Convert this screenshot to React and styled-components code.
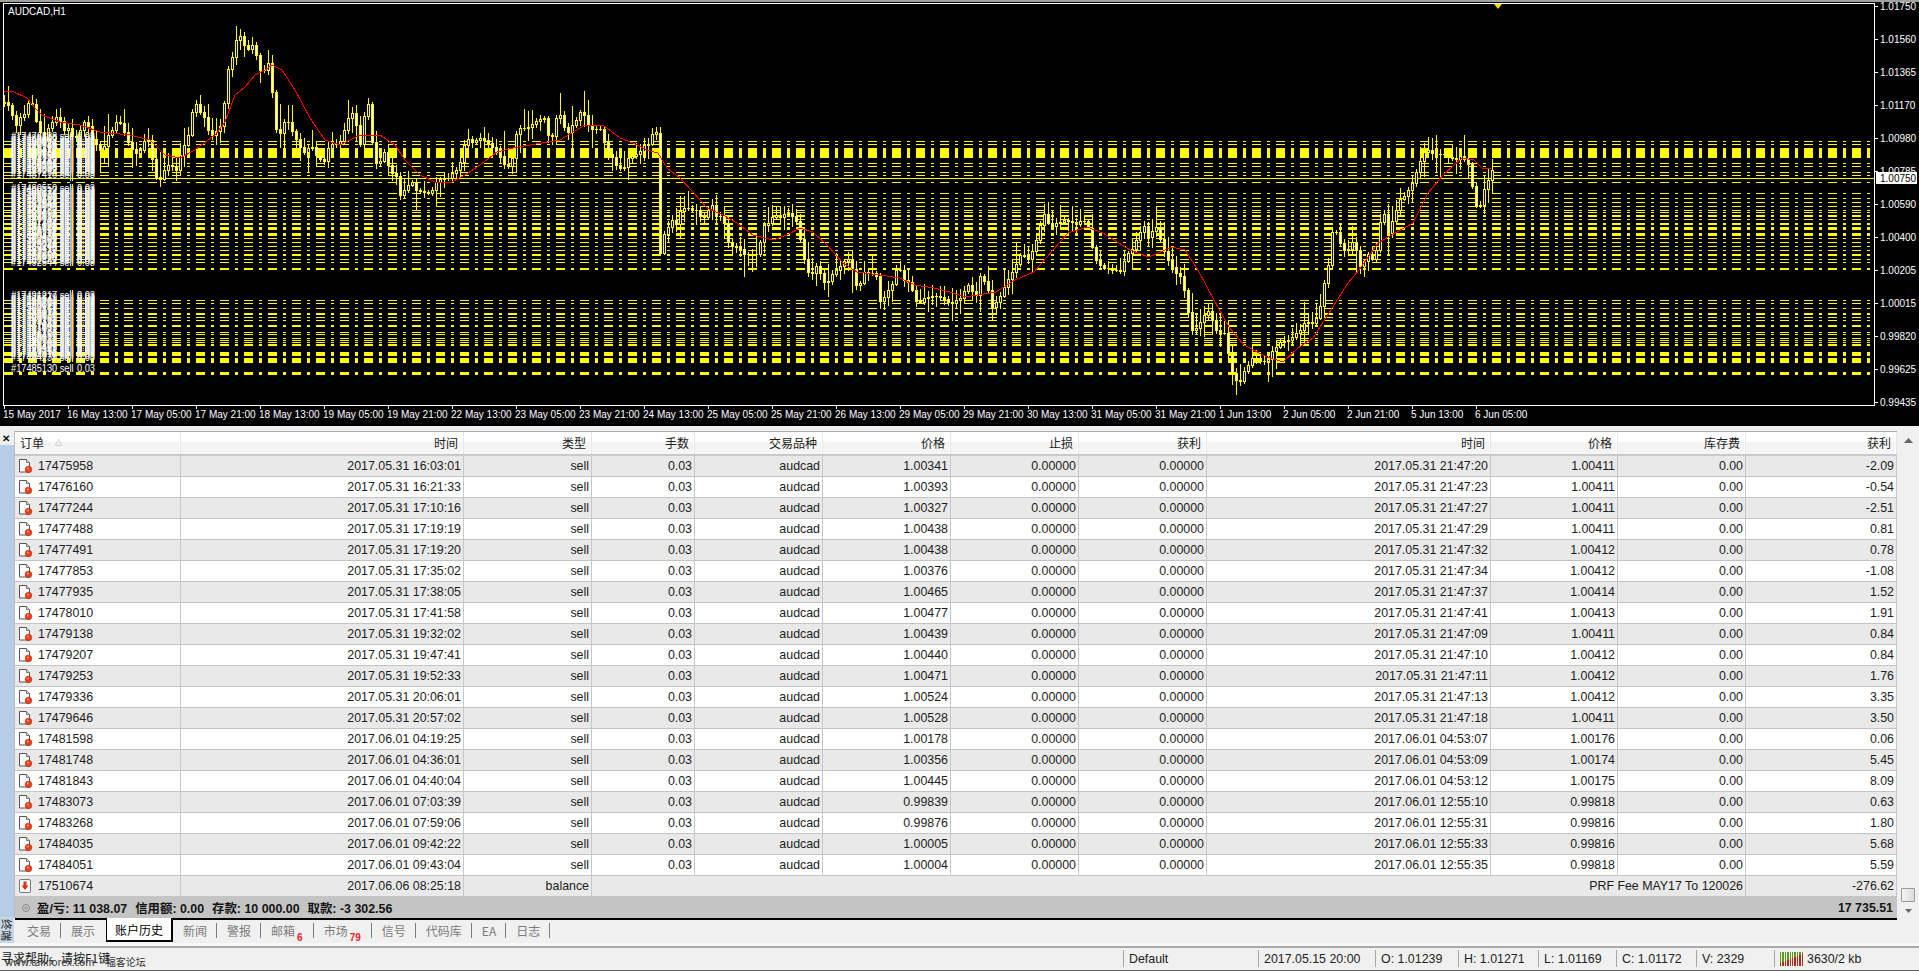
import React from "react";
import styled, { createGlobalStyle } from "styled-components";

const Global = createGlobalStyle`
  html, body { margin: 0; padding: 0; background: #f0f0f0; overflow: hidden; }
  * { box-sizing: border-box; }
`;

const UI_FONT = `"Liberation Sans", "Noto Sans CJK SC", sans-serif`;

/* ---------- chart data ---------- */
const LEFT_KEYS = [[13,310],[25,315],[37,345],[49,380],[61,350],[73,340],[85,310],[97,310],[109,370],[121,400],[133,420],[145,380],[157,365],[169,350],[181,365],[193,390],[205,380],[217,410],[229,410],[241,390],[253,365],[265,380],[277,420],[289,430],[301,450],[313,440],[325,400],[337,390],[349,360],[361,370],[373,400],[385,430],[397,450],[409,460],[421,450],[433,420],[445,420],[457,480],[469,540],[481,540],[493,510],[505,490],[517,500],[529,510],[541,460],[553,430],[565,400],[577,330],[589,310],[601,335],[613,350],[625,395],[637,405],[649,390],[661,380],[673,300],[685,200],[697,165],[709,115],[721,105],[733,135],[745,145],[757,135],[769,165],[781,215],[793,210],[805,190],[817,285],[829,400],[841,400],[853,365],[865,370],[877,395],[889,420],[901,440],[913,460],[925,440],[937,440],[949,465],[961,480],[973,480],[985,440],[997,430],[1009,430],[1021,420],[1033,385],[1045,350],[1057,340],[1069,380],[1081,435],[1093,340],[1105,310],[1117,440],[1129,495],[1141,480],[1153,455],[1165,500],[1177,520],[1189,530],[1201,590],[1213,570],[1225,550],[1237,550],[1249,570],[1261,575],[1273,575],[1285,580],[1297,565],[1309,545],[1321,535],[1333,535],[1345,535],[1357,520],[1369,510],[1381,480],[1393,430],[1405,415],[1417,430],[1429,420],[1441,415],[1453,420],[1465,430]].map(([v, y]) => [v / 3, y / 3]);
const MID_KEYS = [[10,115],[25,130],[48,155],[60,170],[73,195],[88,200],[97,170],[108,100],[122,85],[133,85],[145,85],[157,75],[170,60],[181,55],[193,55],[205,110],[217,110],[229,50],[241,45],[253,85],[265,100],[277,75],[289,60],[301,35],[313,45],[325,80],[337,90],[349,85],[361,85],[373,130],[385,165],[397,170],[409,195],[421,205],[433,200],[445,170],[457,165],[469,165],[481,150],[493,130],[505,130],[517,100],[529,95],[541,100],[553,430],[565,380],[577,360],[589,370],[601,330],[613,320],[625,325],[637,330],[649,330],[661,350],[673,350],[685,330],[697,310],[709,350],[721,350],[733,370],[745,430],[757,440],[769,445],[781,450],[793,465],[805,460],[817,465],[829,460],[841,420],[853,370],[865,370],[877,350],[889,345],[901,350],[913,345],[925,340],[937,350],[949,365],[961,420],[973,480],[985,520],[997,520],[1009,495],[1021,520],[1033,550],[1045,540],[1057,520],[1069,510],[1081,500],[1093,480],[1105,480],[1117,510],[1129,560],[1141,550],[1153,515],[1165,520],[1177,520],[1189,530],[1201,610],[1213,590],[1225,570],[1237,550],[1249,510],[1261,510],[1273,540],[1285,545],[1297,570]].map(([v, y]) => [480 + v / 3, 100 + y / 3]);
const RIGHT_KEYS = [[15,535],[30,570],[45,610],[65,590],[85,590],[110,595],[135,610],[155,595],[180,555],[200,590],[210,520],[230,570],[240,620],[262,590],[285,530],[295,510],[315,460],[335,480],[350,440],[365,380],[375,340],[390,380],[410,370],[430,360],[455,370],[480,360],[495,390],[505,470],[530,500],[550,510],[575,510],[590,470],[605,450],[625,400],[640,370],[650,420],[665,370],[680,420],[700,480],[715,510],[735,530],[745,590],[755,650],[765,700],[785,660],[805,630],[820,680],[835,700],[850,700],[860,780],[870,830],[885,850],[900,810],[920,770],[940,780],[960,780],[975,750],[990,730],[1005,725],[1025,710],[1045,690],[1060,660],[1080,675],[1090,640],[1105,600],[1110,510],[1125,480],[1130,370],[1150,430],[1165,460],[1175,440],[1185,420],[1205,510],[1220,460],[1240,490],[1250,380],[1265,340],[1275,400],[1290,350],[1305,300],[1320,280],[1335,260],[1350,210],[1365,160],[1380,150],[1395,165],[1420,160],[1450,180],[1465,170],[1490,200],[1500,320],[1515,320],[1530,250],[1548,210]].map(([v, y]) => [900 + v * 0.3827, 100 + y / 3]);
const KEYS = [...LEFT_KEYS, ...MID_KEYS, ...RIGHT_KEYS];

const MA_POINTS = "4,91 12,91 27,98 35,108 42,115 60,122 80,125 100,132 130,135 150,140 165,155 180,158 195,150 215,135 225,122 235,95 245,87 255,75 265,70 272,65 282,70 295,90 310,118 325,140 340,145 360,135 380,135 395,145 405,160 420,175 435,182 450,183 465,175 480,165 497,152 513,148 530,145 560,140 585,125 603,125 620,138 633,143 647,150 658,153 667,168 680,178 693,192 707,208 723,215 737,223 753,235 773,240 787,235 800,228 813,232 827,245 843,263 857,272 880,275 900,278 915,285 934,288 950,292 965,297 996,292 1015,280 1034,272 1053,250 1068,233 1087,227 1103,233 1130,250 1149,257 1172,247 1185,250 1198,270 1214,300 1229,327 1244,345 1267,357 1283,362 1298,348 1313,338 1329,313 1348,283 1359,270 1378,243 1397,232 1413,223 1428,193 1443,175 1462,158 1474,160 1482,168 1491,168";

const LEVELS = [[141,1],[144,1],[148,10],[163,1],[166,1],[172,1],[175,1],[182,1],[193,1],[198,1],[202,1],[206,1],[210,1],[212,1],[215,2],[219,1],[223,2],[227,3],[233,3],[238,1],[242,1],[246,1],[250,1],[254,2],[259,1],[262,1],[268,2],[300,1],[303,1],[308,1],[313,2],[317,1],[320,1],[325,2],[332,1],[334,1],[338,1],[340,1],[342,1],[344,1],[345,1],[352,4],[358,5],[372,3]];

const TIME_LABELS = ["15 May 2017","16 May 13:00","17 May 05:00","17 May 21:00","18 May 13:00","19 May 05:00","19 May 21:00","22 May 13:00","23 May 05:00","23 May 21:00","24 May 13:00","25 May 05:00","25 May 21:00","26 May 13:00","29 May 05:00","29 May 21:00","30 May 13:00","31 May 05:00","31 May 21:00","1 Jun 13:00","2 Jun 05:00","2 Jun 21:00","5 Jun 13:00","6 Jun 05:00"];
const PRICE_LABELS = [["1.01750",6],["1.01560",39],["1.01365",72],["1.01170",105],["1.00980",138],["1.00785",171],["1.00590",204],["1.00400",237],["1.00205",270],["1.00015",303],["0.99820",336],["0.99625",369],["0.99435",402]];

function interp(x) {
  if (x <= KEYS[0][0]) return KEYS[0][1];
  for (let i = 1; i < KEYS.length; i++) {
    if (x <= KEYS[i][0]) {
      const [x0, y0] = KEYS[i - 1];
      const [x1, y1] = KEYS[i];
      return y0 + ((y1 - y0) * (x - x0)) / Math.max(x1 - x0, 0.01);
    }
  }
  return KEYS[KEYS.length - 1][1];
}

function buildCandles() {
  let s = 1337;
  const rnd = () => {
    s = (s * 16807) % 2147483647;
    return s / 2147483647;
  };
  let wick = "", frame = "", up = "", down = "";
  let prev = interp(0);
  for (let x = 4; x <= 1492; x += 4) {
    let open = prev;
    let close = Math.round(interp(x) + (rnd() - 0.5) * 2);
    if (x === 660) { open = 133; close = 253; }
    open = Math.round(open);
    const top = Math.min(open, close);
    const bot = Math.max(open, close);
    const hi = Math.max(26, Math.round(top - 2 - rnd() * rnd() * 24));
    const lo = Math.min(395, Math.round(bot + 2 + rnd() * rnd() * 24));
    wick += `M${x} ${hi}h1V${lo}h-1z`;
    frame += `M${x - 1} ${top}h3V${bot + 1}h-3z`;
    if (bot - top >= 2) {
      const inner = `M${x} ${top + 1}h1V${bot}h-1z`;
      if (close > open) down += inner;
      else up += inner;
    }
    prev = close;
  }
  return { wick, frame, up, down };
}

const CANDLES = buildCandles();

const LABEL_BANDS = [[141, 181], [193, 269], [300, 363], [373, 374]];
const ORDER_LABELS = LABEL_BANDS.flatMap(([from, to]) => {
  const list = [];
  for (let y = from; y < to; y += 2) list.push({ y, id: 17500917 - ((y * 7919) % 26000) });
  return list;
});

const Y = "#ffff00";

function Chart() {
  return (
    <ChartSvg viewBox="0 0 1919 426" width="1919" height="426">
      <rect x="0" y="0" width="1919" height="426" fill="#000" />
      <rect x="0" y="0" width="1919" height="2" fill="#a0a0a0" />
      <g shapeRendering="crispEdges">
        {LEVELS.map(([y, h]) => (
          <path key={y} d={`M4 ${y + h / 2}H1871`} stroke={Y} strokeWidth={h} strokeDasharray="9 6 3 6" fill="none" />
        ))}
        <rect x="4" y="178" width="1870" height="1" fill={Y} />
        <path d={CANDLES.wick} fill={Y} />
        <path d={CANDLES.frame} fill={Y} />
        <path d={CANDLES.up} fill="#000" />
        <path d={CANDLES.down} fill="#fff" />
      </g>
      <polyline points={MA_POINTS} fill="none" stroke="#ff0000" strokeWidth="1" shapeRendering="crispEdges" />
      <g transform="translate(11 0) scale(.84 1)" fontFamily="Liberation Sans" fontSize="11" fill="#fff">
        {ORDER_LABELS.map(({ y, id }) => (
          <text key={y} y={y - 1}>
            <tspan x="0">#{id}</tspan>
            <tspan x="58">sell</tspan>
            <tspan x="78.500">0.03</tspan>
          </text>
        ))}
      </g>
      <g shapeRendering="crispEdges">
        <rect x="70" y="140" width="1" height="41" fill="#7fe0d0" />
        <rect x="72" y="140" width="1" height="41" fill="#f4e36a" />
        <rect x="70" y="184" width="1" height="82" fill="#7fe0d0" />
        <rect x="72" y="184" width="1" height="82" fill="#f4e36a" />
        <rect x="70" y="290" width="1" height="72" fill="#7fe0d0" />
        <rect x="72" y="290" width="1" height="72" fill="#f4e36a" />
      </g>
      <g shapeRendering="crispEdges" fill="#fff">
        <rect x="3" y="3" width="1872" height="1" />
        <rect x="3" y="3" width="1" height="403" />
        <rect x="3" y="405" width="1872" height="1" />
        <rect x="1874" y="3" width="1" height="403" />
        {PRICE_LABELS.map(([, y]) => <rect key={y} x="1875" y={y} width="3" height="1" />)}
        {TIME_LABELS.map((t, i) => <rect key={t} x={4 + i * 64} y="406" width="1" height="3" />)}
      </g>
      <g fontFamily="Liberation Sans" fontSize="10" fill="#fff">
        <text x="8" y="15">AUDCAD,H1</text>
        {TIME_LABELS.map((t, i) => <text key={t} x={3 + i * 64} y="418">{t}</text>)}
        {PRICE_LABELS.map(([t, y]) => <text key={t} x="1880" y={y + 4}>{t}</text>)}
      </g>
      <rect x="1876" y="172" width="41" height="12" fill="#fff" />
      <text x="1880" y="182" fontFamily="Liberation Sans" fontSize="10" fill="#000">1.00750</text>
      <polygon points="1494,4 1502,4 1498,9" fill="#ffd700" />
    </ChartSvg>
  );
}

/* ---------- table data ---------- */
const COLS = "166px 283px 128px 103px 128px 128px 128px 128px 284px 127px 128px 151px";
const HEADERS = ["订单","时间","类型","手数","交易品种","价格","止损","获利","时间","价格","库存费","获利"];
const D1 = "2017.05.31 ";
const D2 = "2017.06.01 ";
const ROWS = [
  ["17475958",D1+"16:03:01","1.00341",D1+"21:47:20","1.00411","-2.09"],
  ["17476160",D1+"16:21:33","1.00393",D1+"21:47:23","1.00411","-0.54"],
  ["17477244",D1+"17:10:16","1.00327",D1+"21:47:27","1.00411","-2.51"],
  ["17477488",D1+"17:19:19","1.00438",D1+"21:47:29","1.00411","0.81"],
  ["17477491",D1+"17:19:20","1.00438",D1+"21:47:32","1.00412","0.78"],
  ["17477853",D1+"17:35:02","1.00376",D1+"21:47:34","1.00412","-1.08"],
  ["17477935",D1+"17:38:05","1.00465",D1+"21:47:37","1.00414","1.52"],
  ["17478010",D1+"17:41:58","1.00477",D1+"21:47:41","1.00413","1.91"],
  ["17479138",D1+"19:32:02","1.00439",D1+"21:47:09","1.00411","0.84"],
  ["17479207",D1+"19:47:41","1.00440",D1+"21:47:10","1.00412","0.84"],
  ["17479253",D1+"19:52:33","1.00471",D1+"21:47:11","1.00412","1.76"],
  ["17479336",D1+"20:06:01","1.00524",D1+"21:47:13","1.00412","3.35"],
  ["17479646",D1+"20:57:02","1.00528",D1+"21:47:18","1.00411","3.50"],
  ["17481598",D2+"04:19:25","1.00178",D2+"04:53:07","1.00176","0.06"],
  ["17481748",D2+"04:36:01","1.00356",D2+"04:53:09","1.00174","5.45"],
  ["17481843",D2+"04:40:04","1.00445",D2+"04:53:12","1.00175","8.09"],
  ["17483073",D2+"07:03:39","0.99839",D2+"12:55:10","0.99818","0.63"],
  ["17483268",D2+"07:59:06","0.99876",D2+"12:55:31","0.99816","1.80"],
  ["17484035",D2+"09:42:22","1.00005",D2+"12:55:33","0.99816","5.68"],
  ["17484051",D2+"09:43:04","1.00004",D2+"12:55:35","0.99818","5.59"],
];

const TABS = [
  { label: "交易" }, { label: "展示" }, { label: "账户历史", active: true }, { label: "新闻" },
  { label: "警报" }, { label: "邮箱", badge: "6" }, { label: "市场", badge: "79" }, { label: "信号" },
  { label: "代码库" }, { label: "EA" }, { label: "日志" },
];

/* ---------- styled parts ---------- */
const Root = styled.div`
  width: 1919px; height: 971px; display: flex; flex-direction: column;
  background: #f0f0f0; font-family: ${UI_FONT}; overflow: hidden;
`;
const ChartSvg = styled.svg`display: block; flex: none;`;
const ChartGap = styled.div`height: 5px; flex: none; background: #f0f0f0;`;
const Terminal = styled.div`display: flex; height: 512px; flex: none;`;
const Rail = styled.div`width: 15px; flex: none; display: flex; flex-direction: column;`;
const CloseBox = styled.div`
  height: 14px; display: flex; align-items: center; justify-content: center;
  font: bold 10px "Liberation Sans", sans-serif; color: #111; padding-right: 3px;
`;
const RailBlue = styled.div`flex: 1; background: #b6cde6; margin-right: 1px;`;
const RailTitle = styled.div`
  height: 26px; background: #c9d8e8; overflow: hidden; color: #222; margin-right: 1px;
  font: 11px/14px "Noto Sans CJK SC", sans-serif; text-align: center;
  writing-mode: vertical-rl; text-orientation: sideways;
`;
const Main = styled.div`flex: 1; display: flex; flex-direction: column; min-width: 0;`;
const TableWrap = styled.div`display: flex; height: 487px; flex: none;`;
const Table = styled.div`
  width: 1882px; flex: none; display: flex; flex-direction: column; box-shadow: -1px 0 0 #bcbcbc;
`;
const HeadRow = styled.div`
  display: grid; grid-template-columns: ${COLS}; height: 25px; flex: none;
  border-top: 1px solid #ababab; border-bottom: 2px solid #c9c9c9;
  background: linear-gradient(#ffffff 0%, #ffffff 45%, #f3f3f3 46%, #f6f6f6 100%);
`;
const HeadCell = styled.div`
  display: flex; align-items: center; justify-content: ${p => (p.$left ? "flex-start" : "flex-end")};
  padding: 0 5px 2px; font: 12px "Noto Sans CJK SC", sans-serif; color: #222;
  border-right: 1px solid #e6e6e6; box-shadow: inset -1px 0 0 #fff;
`;
const SortMark = styled.span`font-size: 7px; color: #666; margin-left: 11px;`;
const Row = styled.div`
  display: grid; grid-template-columns: ${COLS}; height: 21px; flex: none;
  background: ${p => (p.$odd ? "#e9e9e9" : "#ffffff")}; border-bottom: 1px solid #c4c4c4;
`;
const Cell = styled.div`
  display: flex; align-items: center; justify-content: flex-end; white-space: nowrap;
  padding-right: 2px; font-size: 12.4px; color: #1c1c1c; border-right: 1px solid #c8c8c8;
`;
const OrderCell = styled(Cell)`justify-content: flex-start; padding-left: 3px; gap: 5px;`;
const NoteCell = styled(Cell)`grid-column: 4 / span 8;`;
const Summary = styled.div`
  height: 21px; flex: none; background: #c4c4c4; display: flex; align-items: center;
  padding: 0 4px 0 7px; font-size: 12.4px; font-weight: bold; color: #141414;
`;
const SumDot = styled.span`
  width: 8px; height: 8px; border-radius: 50%; background: #a8a8a8; border: 1px solid #8a8a8a;
  box-shadow: inset 0 0 0 1px #d0d0d0; margin-right: 7px; flex: none;
`;
const SumItems = styled.div`display: flex; gap: 8px; flex: 1; font-family: ${UI_FONT};`;
const Scrollbar = styled.div`
  flex: 1; background: #f0f0f0; display: flex; flex-direction: column; align-items: center;
  padding: 7px 0 0;
`;
const ScrollSpacer = styled.div`flex: 1;`;
const ScrollThumb = styled.div`
  width: 14px; height: 14px; background: linear-gradient(90deg, #f4f4f4, #dcdcdc);
  border: 1px solid #9a9a9a; border-radius: 1px; margin-bottom: 7px; margin-right: 1px;
`;
const ScrollArrow = styled.svg`display: block; flex: none; margin-bottom: ${p => p.$mb || 0}px;`;
const Tabs = styled.div`
  height: 25px; flex: none; display: flex; align-items: stretch; padding-left: 2px;
  background: #f0f0f0; border-top: 2px solid #000; margin-right: 22px;
`;
const Tab = styled.div`
  position: relative; display: flex; align-items: center; padding: 0 ${p => (p.$active ? 8 : 10)}px 3px;
  font: 12px "Noto Sans CJK SC", sans-serif; white-space: nowrap;
  color: ${p => (p.$active ? "#000" : "#7c7c7c")};
  ${p => p.$active && `
    background: #fff; margin-top: -2px; height: 24px; border: 1px solid #000; border-top: none;
    border-bottom-width: 2px; border-right-width: 2px; margin-left: 1px; padding-bottom: 0;
  `}
  ${p => p.$sep && `
    &::after { content: ""; position: absolute; right: 0; top: 3px; height: 15px; width: 1px; background: #7c7c7c; }
  `}
`;
const Badge = styled.span`
  color: #ee1c25; font: bold 10px "Liberation Sans", sans-serif; margin: 7px 1px -7px 2px;
`;
const Divider = styled.div`
  height: 5px; flex: none; background: #f7f7f7; border-bottom: 2px solid #aaaaaa;
`;
const StatusBar = styled.div`
  flex: 1; display: flex; align-items: stretch; background: #f0f0f0; font-size: 12.4px; color: #222;
  border-bottom: 1px solid #606060; padding-top: 1px;
`;
const StatusLeft = styled.div`width: 1123px; flex: none; position: relative;`;
const HelpText = styled.span`
  position: absolute; left: 1px; top: 0; font: 12px/18px "Noto Sans CJK SC", sans-serif; color: #222;
`;
const SiteText = styled.span`
  position: absolute; left: 5px; top: 4px; font: 10px/18px "Noto Sans CJK SC", sans-serif; color: #333;
  word-spacing: 9px;
`;
const StatusItem = styled.div`
  width: ${p => p.$w}px; flex: none; border-left: 1px solid #a6a6a6; padding-left: 5px;
  display: flex; align-items: center; gap: 3px; white-space: nowrap; margin: 1px 0 3px;
`;

function OrderIcon() {
  return (
    <svg width="15" height="16" viewBox="0 0 15 16">
      <path d="M1.5 1.5h7l3 3v9.500h-10z" fill="#fbfbfb" stroke="#555" strokeWidth="1" />
      <path d="M8.500 1.500v3h3" fill="#e2e2e2" stroke="#777" strokeWidth="1" />
      <circle cx="10.500" cy="11.500" r="3.300" fill="#e8401a" stroke="#b52a10" strokeWidth=".6" />
      <circle cx="9.800" cy="10.600" r="1" fill="#ff9a70" />
    </svg>
  );
}

function BalanceIcon() {
  return (
    <svg width="15" height="16" viewBox="0 0 15 16">
      <rect x="1.500" y="1.500" width="11" height="13" rx="1.500" fill="#fbfbfb" stroke="#777" />
      <path d="M5.500 3.500h3v4h2l-3.500 4.500-3.500-4.500h2z" fill="#dd3311" />
    </svg>
  );
}

function NetIcon() {
  const bars = [3, 4, 5, 6, 7, 8, 9, 10, 11, 12];
  return (
    <svg width="24" height="15" viewBox="0 0 24 15">
      {bars.map((h, i) => (
        <g key={i} shapeRendering="crispEdges">
          <rect x={i * 2.400} y="1" width="1.400" height={14 - h} fill="#5c9a1a" />
          <rect x={i * 2.400} y={15 - h} width="1.400" height={h} fill="#b02a14" />
        </g>
      ))}
    </svg>
  );
}

export default function App() {
  return (
    <Root>
      <Global />
      <Chart />
      <ChartGap />
      <Terminal>
        <Rail>
          <CloseBox>✕</CloseBox>
          <RailBlue />
          <RailTitle>终端</RailTitle>
        </Rail>
        <Main>
          <TableWrap>
            <Table>
              <HeadRow>
                {HEADERS.map((h, i) => (
                  <HeadCell key={i} $left={i === 0}>
                    {h}
                    {i === 0 && <SortMark>△</SortMark>}
                  </HeadCell>
                ))}
              </HeadRow>
              {ROWS.map((r, i) => (
                <Row key={r[0]} $odd={i % 2 === 0}>
                  <OrderCell><OrderIcon />{r[0]}</OrderCell>
                  <Cell>{r[1]}</Cell>
                  <Cell>sell</Cell>
                  <Cell>0.03</Cell>
                  <Cell>audcad</Cell>
                  <Cell>{r[2]}</Cell>
                  <Cell>0.00000</Cell>
                  <Cell>0.00000</Cell>
                  <Cell>{r[3]}</Cell>
                  <Cell>{r[4]}</Cell>
                  <Cell>0.00</Cell>
                  <Cell>{r[5]}</Cell>
                </Row>
              ))}
              <Row $odd>
                <OrderCell><BalanceIcon />17510674</OrderCell>
                <Cell>2017.06.06 08:25:18</Cell>
                <Cell>balance</Cell>
                <NoteCell>PRF Fee MAY17 To 120026</NoteCell>
                <Cell>-276.62</Cell>
              </Row>
              <Summary>
                <SumDot />
                <SumItems>
                  <span>盈/亏: 11 038.07</span>
                  <span>信用额: 0.00</span>
                  <span>存款: 10 000.00</span>
                  <span>取款: -3 302.56</span>
                </SumItems>
                <span>17 735.51</span>
              </Summary>
            </Table>
            <Scrollbar>
              <ScrollArrow width="9" height="5" viewBox="0 0 9 5"><path d="M0 5L4.500 0 9 5z" fill="#666" /></ScrollArrow>
              <ScrollSpacer />
              <ScrollThumb />
              <ScrollArrow width="7" height="4" viewBox="0 0 7 4" $mb={5}><path d="M0 0h7L3.500 4z" fill="#666" /></ScrollArrow>
            </Scrollbar>
          </TableWrap>
          <Tabs>
            {TABS.map((t, i) => {
              const next = TABS[i + 1];
              const sep = !t.active && !(next && next.active);
              return (
                <Tab key={t.label} $active={t.active} $sep={sep}>
                  {t.label}
                  {t.badge && <Badge>{t.badge}</Badge>}
                </Tab>
              );
            })}
          </Tabs>
        </Main>
      </Terminal>
      <Divider />
      <StatusBar>
        <StatusLeft>
          <HelpText>寻求帮助，请按F1键</HelpText>
          <SiteText>www.talkforex.com 福客论坛</SiteText>
        </StatusLeft>
        <StatusItem $w={135}>Default</StatusItem>
        <StatusItem $w={117}>2017.05.15 20:00</StatusItem>
        <StatusItem $w={83}>O: 1.01239</StatusItem>
        <StatusItem $w={80}>H: 1.01271</StatusItem>
        <StatusItem $w={78}>L: 1.01169</StatusItem>
        <StatusItem $w={80}>C: 1.01172</StatusItem>
        <StatusItem $w={78}>V: 2329</StatusItem>
        <StatusItem $w={145}><NetIcon />3630/2 kb</StatusItem>
      </StatusBar>
    </Root>
  );
}
